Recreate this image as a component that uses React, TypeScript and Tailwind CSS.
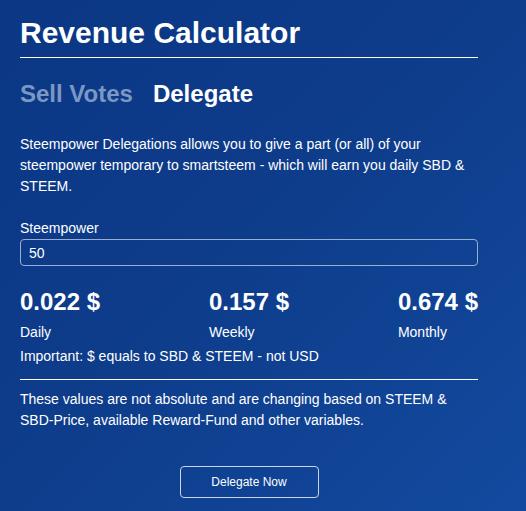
export default function App() {
  return (
    <div className="min-h-[511px] w-full bg-gradient-to-br from-[#0b3784] via-[#0e3d8c] to-[#134a9f] font-['Liberation_Sans',Arial,sans-serif] text-white">
      <div className="w-[478px] pl-5 pt-[15px]">
        <h1 className="text-[30px] font-bold leading-[36px]">Revenue Calculator</h1>
        <hr className="mt-[6px] border-t border-white" />
        <div className="mt-[21px] flex gap-5 text-[24px] font-bold leading-[30px]">
          <span className="text-[#7b97c4]">Sell Votes</span>
          <span>Delegate</span>
        </div>
        <p className="mt-[25px] text-[14px] leading-[21px]">
          Steempower Delegations allows you to give a part (or all) of your steempower temporary to smartsteem - which will earn you daily SBD &amp; STEEM.
        </p>
        <label className="mt-[21px] block text-[14px] leading-[20px]">Steempower</label>
        <input
          defaultValue="50"
          className="mt-[1px] block h-[27px] w-full rounded-[4px] border border-[#9aaed0] bg-transparent px-2 text-[14px] text-white outline-none"
        />
        <div className="mt-[22px] flex justify-between">
          {[
            ["0.022 $", "Daily"],
            ["0.157 $", "Weekly"],
            ["0.674 $", "Monthly"],
          ].map(([v, l]) => (
            <div key={l}>
              <div className="text-[24px] font-bold leading-[28px]">{v}</div>
              <div className="mt-[6px] text-[14px] leading-[20px]">{l}</div>
            </div>
          ))}
        </div>
        <p className="mt-[4px] text-[14px] leading-[20px]">Important: $ equals to SBD &amp; STEEM - not USD</p>
        <hr className="mt-[13px] border-t border-white" />
        <p className="mt-[9px] text-[14px] leading-[21px]">
          These values are not absolute and are changing based on STEEM &amp; SBD-Price, available Reward-Fund and other variables.
        </p>
        <div className="mt-[35px] flex justify-center">
          <button className="h-[32px] w-[139px] rounded-[4px] border border-[#c9d4e8] text-[12px] font-medium">
            Delegate Now
          </button>
        </div>
      </div>
    </div>
  );
}
